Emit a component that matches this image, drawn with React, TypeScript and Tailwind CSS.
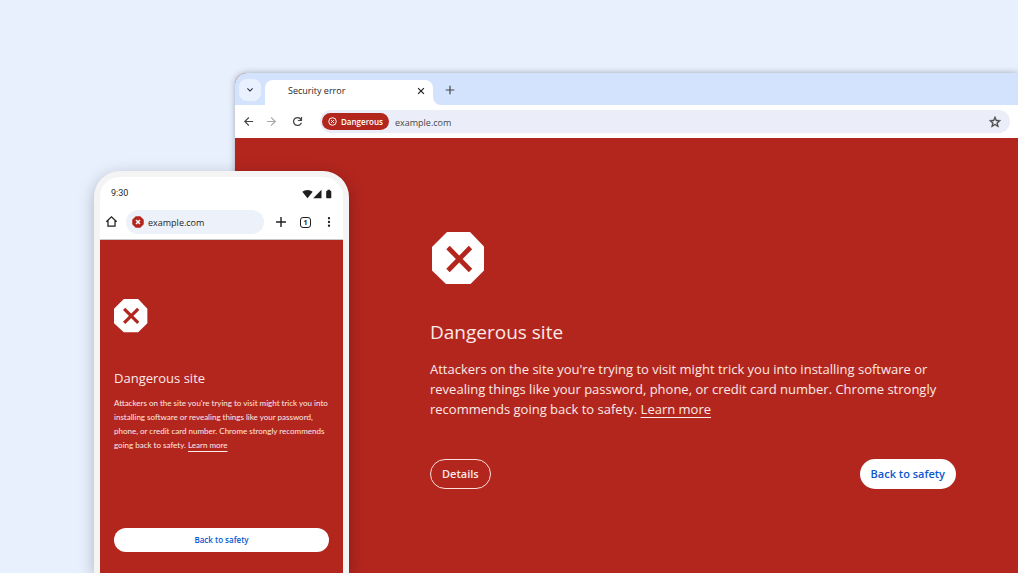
import type { ReactNode } from "react";

type IconProps = { className?: string };

function Icon({ className = "", children }: { className?: string; children: ReactNode }) {
  return (
    <svg viewBox="0 0 24 24" className={className} fill="currentColor" aria-hidden="true">
      {children}
    </svg>
  );
}

const ChevronDown = ({ className }: IconProps) => (
  <Icon className={className}><path d="M7.41 8.100 12 12.670l4.590-4.570L18 9.500l-6 6-6-6z" /></Icon>
);
const Close = ({ className }: IconProps) => (
  <Icon className={className}><path d="M20 6 18 4 12 10 6 4 4 6l6 6-6 6 2 2 6-6 6 6 2-2-6-6z" /></Icon>
);
const Plus = ({ className }: IconProps) => (
  <Icon className={className}><path d="M20.500 13.200h-7.300v7.300h-2.400v-7.300H3.500v-2.400h7.300V3.500h2.400v7.300h7.300z" /></Icon>
);
const ArrowBack = ({ className }: IconProps) => (
  <Icon className={className}><path d="M20.500 10.900H7.830l5.800-5.700L12 3.600 3.600 12l8.400 8.400 1.600-1.600-5.800-5.700h12.700z" /></Icon>
);
const ArrowForward = ({ className }: IconProps) => (
  <Icon className={className}><path d="M3.500 10.900h12.670l-5.800-5.700L12 3.600l8.400 8.400-8.400 8.400-1.600-1.600 5.800-5.700H3.500z" /></Icon>
);
const Reload = ({ className }: IconProps) => (
  <Icon className={className}><path d="M12 20.500q-3.550 0-6.030-2.480T3.500 12t2.470-6.020T12 3.500q1.830 0 3.450.76T18.200 6.400V3.500h2.300v7.800h-7.800V9h4.300q-.8-1.400-2.100-2.200T12 5.900Q9.450 5.900 7.670 7.670T5.900 12t1.770 4.330T12 18.100q1.930 0 3.480-1.100T17.650 14.100h2.500q-.7 2.850-2.950 4.620T12 20.500z" /></Icon>
);
const Star = ({ className }: IconProps) => (
  <Icon className={className}><path stroke="currentColor" strokeWidth="0.700" d="m22 9.240-7.190-.62L12 2 9.190 8.630 2 9.240l5.460 4.730L5.820 21 12 17.270 18.180 21l-1.630-7.030zM12 15.400l-3.760 2.270 1-4.280-3.320-2.880 4.380-.38L12 6.100l1.710 4.040 4.380.38-3.320 2.880 1 4.280z" /></Icon>
);
const Home = ({ className }: IconProps) => (
  <svg viewBox="0 0 24 24" className={className} fill="none" stroke="currentColor" strokeWidth="2.300" aria-hidden="true">
    <path d="M2.500 12.500 12 3.500l9.500 9M5.500 10.500V20.500h13V10.500" />
  </svg>
);
const MoreVert = ({ className }: IconProps) => (
  <Icon className={className}><circle cx="12" cy="4.500" r="2.300" /><circle cx="12" cy="12" r="2.300" /><circle cx="12" cy="19.500" r="2.300" /></Icon>
);
const CircledX = ({ className }: IconProps) => (
  <svg viewBox="0 0 24 24" className={className} fill="none" stroke="currentColor" strokeWidth="2.600" aria-hidden="true">
    <circle cx="12" cy="12" r="10" />
    <path d="m8 8 8 8M16 8l-8 8" />
  </svg>
);
const OctagonX = ({ className }: IconProps) => (
  <svg viewBox="0 0 52 52" className={className} aria-hidden="true">
    <path fill="#fff" d="M15 0h23L52 14.500v24L38.500 52H14L0 38.500V15z" />
    <path stroke="#b3261e" strokeWidth="4.800" fill="none" d="M16 15.500 38.500 38.500M38.500 15.500 16 38.500" />
  </svg>
);
const PhoneOctagonX = ({ className }: IconProps) => (
  <svg viewBox="0 0 52 52" className={className} aria-hidden="true">
    <path fill="#fff" d="M15 0h22L51 15v22L37 51H15L0 37V15z" />
    <path stroke="#b3261e" strokeWidth="4.800" fill="none" d="M15.500 15 37 36.500M37 15 15.500 36.500" />
  </svg>
);
const SmallOctagonX = ({ className }: IconProps) => (
  <svg viewBox="0 0 24 24" className={className} aria-hidden="true">
    <path fill="#b3261e" stroke="#b3261e" strokeWidth="3" strokeLinejoin="round" d="M8 2h8l6 6v8l-6 6H8l-6-6V8z" />
    <path stroke="#fff" strokeWidth="3" d="m8 8 8 8M16 8l-8 8" />
  </svg>
);

function Message() {
  return (
    <>
      Attackers on the site you're trying to visit might trick you into installing software or
      revealing things like your password, phone, or credit card number. Chrome strongly recommends
      going back to safety.{" "}
      <a href="#learn" className="underline decoration-1 underline-offset-3">Learn more</a>
    </>
  );
}

function BrowserWindow() {
  return (
    <section
      aria-label="Desktop browser"
      className="flex grow flex-col overflow-hidden rounded-tl-xl bg-[#b3261e] shadow-[0_0_6px_rgba(60,64,67,0.4)]"
    >
      <header className="bg-[#d3e3fd]">
        <div className="flex h-8 items-end">
          <button aria-label="Search tabs" className="mx-1 mb-1 flex size-[22px] items-center justify-center rounded-lg bg-[#e9f1fe] text-[#303134]">
            <ChevronDown className="size-3" />
          </button>
          <div className="flex h-[25px] w-[168px] items-center justify-between rounded-t-lg bg-white pr-[7px] pb-1 pl-[23px] text-[#1f1f1f]">
            <span className="text-[9px] font-medium">Security error</span>
            <button aria-label="Close tab"><Close className="size-2.5" /></button>
          </div>
          <svg viewBox="0 0 8 8" className="size-2 text-white" fill="currentColor" aria-hidden="true"><path d="M0 0a8 8 0 0 0 8 8H0z" /></svg>
          <button aria-label="New tab" className="mb-[9px] ml-[3px] text-[#474747]"><Plus className="size-3" /></button>
        </div>
        <div className="flex h-[33px] items-center bg-white pr-2 pl-[7px] text-[#474747]">
          <button aria-label="Back"><ArrowBack className="size-[13px]" /></button>
          <button aria-label="Forward" className="ml-2.5 text-[#a8a8a8]"><ArrowForward className="size-[13px]" /></button>
          <button aria-label="Reload" className="ml-[13px]"><Reload className="size-[13px]" /></button>
          <div className="ml-4 flex h-[23px] grow items-center rounded-full bg-[#ebeef8] pr-2 pl-0.5">
            <span className="flex h-[17px] items-center gap-1 rounded-full bg-[#b3261e] px-1.5 text-[8px] font-semibold text-white">
              <CircledX className="size-[9px]" />
              Dangerous
            </span>
            <input aria-label="Address" defaultValue="example.com" className="ml-1.5 min-w-0 grow bg-transparent pt-0.5 text-[9px] text-[#474747] outline-none" />
            <button aria-label="Bookmark this page"><Star className="size-3.5" /></button>
          </div>
        </div>
      </header>
      <div className="pt-[94px] pr-[62px] pl-[195px] text-[#fbe9e7]">
        <OctagonX className="ml-0.5 size-[52px]" />
        <h1 className="mt-8 text-[19px] leading-8">Dangerous site</h1>
        <p className="mt-[11px] text-[13px] leading-5"><Message /></p>
        <div className="mt-10 flex items-center justify-between text-[11px] font-semibold">
          <button className="h-[30px] rounded-full border border-[#f9dedc] px-[11px]">Details</button>
          <button className="h-[30px] rounded-full bg-white px-[11px] text-[#0b57d0]">Back to safety</button>
        </div>
      </div>
    </section>
  );
}

function Phone() {
  return (
    <section
      aria-label="Phone browser"
      className="absolute top-[171px] bottom-0 left-[94px] flex w-[255px] flex-col rounded-t-[26px] bg-[#f5f4f4] px-1.5 pt-1.5 shadow-[0_4px_16px_rgba(0,0,0,0.25)]"
    >
      <header className="rounded-t-[20px] border-b border-[#c9c9c9] bg-white text-[#1f1f1f]">
        <div className="flex h-[33px] items-center justify-between px-[11px]">
          <span className="font-['Roboto',sans-serif] text-[9px]">9:30</span>
          <svg viewBox="0 0 30 10" className="h-2.5 w-[30px]" fill="currentColor" aria-hidden="true">
            <path d="M0.300 2.700Q2.500 1 5.500 1T10.700 2.700L5.500 9.200zM11.200 9.300 19.500 0.700V9.300zM25.500 0.700H28v1h.6a.7.7 0 0 1 .7.7v6.200a.7.7 0 0 1-.7.7h-3.700a.7.7 0 0 1-.7-.7V2.400a.7.7 0 0 1 .7-.7h.6z" />
          </svg>
        </div>
        <div className="flex h-[29px] items-start pr-2 pl-[5px]">
          <button aria-label="Home" className="mt-[5px]"><Home className="size-[13px]" /></button>
          <div className="ml-2 flex h-6 w-[138px] items-center gap-1 rounded-full bg-[#ecf1fa] px-1.5">
            <SmallOctagonX className="size-3 shrink-0" />
            <input aria-label="Mobile address" defaultValue="example.com" className="min-w-0 grow bg-transparent pt-0.5 text-[9px] outline-none" />
          </div>
          <div className="flex h-6 grow items-center justify-between pl-2.5">
            <button aria-label="Open new tab"><Plus className="size-3.5" /></button>
            <button aria-label="Switch tabs" className="flex size-[11px] items-center justify-center rounded-[3px] border border-current text-[7px] leading-none font-bold">1</button>
            <button aria-label="More options"><MoreVert className="size-3" /></button>
          </div>
        </div>
      </header>
      <div className="flex grow flex-col bg-[#b3261e] px-3.5 pt-[59px] text-[#fbe9e7]">
        <PhoneOctagonX className="size-[34px]" />
        <h2 className="mt-[35px] text-[13px] leading-5">Dangerous site</h2>
        <p className="mt-2 font-['Lato',sans-serif] text-[8px] leading-3.5"><Message /></p>
        <button className="mt-[76px] h-6 rounded-full bg-white text-[8px] font-semibold text-[#0b57d0]">Back to safety</button>
      </div>
    </section>
  );
}

export default function App() {
  return (
    <main className="relative flex min-h-screen overflow-hidden bg-[#e8f0fe] pt-[73px] pl-[235px] font-['Open_Sans','Noto_Sans',sans-serif]">
      <BrowserWindow />
      <Phone />
    </main>
  );
}
